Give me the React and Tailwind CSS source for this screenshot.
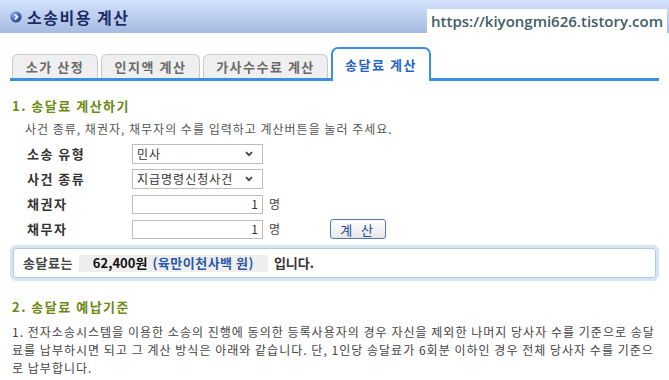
const tabs = [
  { label: '소가 산정', w: 'w-[86px]' },
  { label: '인지액 계산', w: 'w-[99px]' },
  { label: '가사수수료 계산', w: 'w-[125px]' },
];

function Chevron() {
  return (
    <svg width="8" height="6" viewBox="0 0 8 6" className="shrink-0">
      <path d="M1 1.2 L4 4.2 L7 1.2" fill="none" stroke="#444" strokeWidth="1.8" />
    </svg>
  );
}

function SelectBox({ value }) {
  return (
    <div className="w-[131px] h-[20px] border border-[#bdbdbd] bg-white flex items-center justify-between pl-[4px] pr-[9px] text-[12px] tracking-[1px] text-[#333]">
      <span>{value}</span>
      <Chevron />
    </div>
  );
}

function NumberBox() {
  return (
    <div className="w-[131px] h-[19px] border border-[#bdbdbd] bg-white flex items-center justify-end pr-[4px] text-[12px] text-[#333]">
      1
    </div>
  );
}

function Row({ label, children }) {
  return (
    <div className="flex items-center h-[20px]">
      <span className="w-[105px] text-[13px] font-bold tracking-[1.5px] text-[#333]">{label}</span>
      {children}
    </div>
  );
}

export default function App() {
  return (
    <div className="w-[669px] h-[380px] overflow-hidden bg-white font-['Noto_Sans_CJK_KR','Noto_Sans',sans-serif] text-[#333]">
      <header className="h-[33px] flex justify-between bg-linear-to-b from-[#d3e3fc] to-[#a6bae2]">
        <div className="flex items-center gap-[5px] pl-[10px] pt-[1px]">
          <svg width="12" height="12" viewBox="0 0 12 12">
            <defs>
              <radialGradient id="ic" cx="35%" cy="30%" r="75%">
                <stop offset="0" stopColor="#8fb0f0" />
                <stop offset="1" stopColor="#223c8c" />
              </radialGradient>
            </defs>
            <circle cx="6" cy="6" r="5.6" fill="url(#ic)" />
            <path d="M5 3.6 L7.2 6 L5 8.4" fill="none" stroke="#fff" strokeWidth="1.6" />
          </svg>
          <h1 className="text-[16px] font-bold text-[#1c2c68] tracking-[1.5px]">소송비용 계산</h1>
        </div>
        <div className="self-end h-[24px] mr-[2px] bg-white px-[4px] flex items-center font-['Open_Sans',sans-serif] text-[15px] font-semibold text-[#3e5d66]">
          https://kiyongmi626.tistory.com
        </div>
      </header>

      <nav className="mx-[10px] mt-[14px] pl-[2px] flex items-end gap-[3px] border-b-[3px] border-[#3a8fe0]">
        {tabs.map((t) => (
          <div
            key={t.label}
            className={`${t.w} h-[24px] flex items-center justify-center rounded-t-[6px] border border-b-0 border-[#c9c9c9] bg-[#efefef] text-[13px] font-bold tracking-[1.5px] text-[#6a6a6a]`}
          >
            {t.label}
          </div>
        ))}
        <div className="w-[100px] h-[34px] -mb-[3px] flex items-center justify-center rounded-t-[7px] border-2 border-b-0 border-[#3a8fe0] bg-white text-[13px] font-bold tracking-[1.5px] text-[#2563c9]">
          송달료 계산
        </div>
      </nav>

      <section className="px-[12px] pt-[17px]">
        <h2 className="text-[13px] leading-[16px] font-bold text-[#6b8a12] tracking-[1.5px]">1. 송달료 계산하기</h2>
        <p className="mt-[7px] pl-[13px] text-[12px] leading-[16px] tracking-[1px] text-[#555]">
          사건 종류, 채권자, 채무자의 수를 입력하고 계산버튼을 눌러 주세요.
        </p>
        <div className="mt-[7px] pl-[15px] flex flex-col gap-[5px]">
          <Row label="소송 유형">
            <SelectBox value="민사" />
          </Row>
          <Row label="사건 종류">
            <SelectBox value="지급명령신청사건" />
          </Row>
          <Row label="채권자">
            <NumberBox />
            <span className="ml-[6px] text-[12px] text-[#444]">명</span>
          </Row>
          <Row label="채무자">
            <NumberBox />
            <span className="ml-[6px] text-[12px] text-[#444]">명</span>
            <button className="ml-[50px] w-[56px] h-[20px] rounded-[3px] border border-[#5877a6] bg-linear-to-b from-white to-[#e6e6e6] text-[13px] text-[#1b4c9c] tracking-[3px]">
              계 산
            </button>
          </Row>
        </div>
      </section>

      <div className="mx-[10px] mt-[6px] h-[36px] rounded-[6px] border-[3px] border-[#d6e5f4] shadow-[inset_0_0_0_1px_#aecbe8] flex items-center pl-[10px] text-[13px] font-bold">
        <span className="text-[#444] tracking-[0.5px]">송달료는</span>
        <span className="ml-[6px] h-[17px] px-[14px] bg-[#eeeeee] flex items-center">
          <span className="text-[#111]">62,400원</span>
          <span className="ml-[5px] text-[#2a5aa6] tracking-[0.5px]">(육만이천사백 원)</span>
        </span>
        <span className="ml-[6px] text-[#333]">입니다.</span>
      </div>

      <section className="px-[12px] pt-[18px]">
        <h2 className="text-[13px] leading-[16px] font-bold text-[#6b8a12] tracking-[1.5px]">2. 송달료 예납기준</h2>
        <p className="mt-[8px] w-[648px] text-[12px] leading-[18px] text-[#444] tracking-[1.02px]">
          1. 전자소송시스템을 이용한 소송의 진행에 동의한 등록사용자의 경우 자신을 제외한 나머지 당사자 수를 기준으로 송달료를 납부하시면 되고 그 계산 방식은 아래와 같습니다. 단, 1인당 송달료가 6회분 이하인 경우 전체 당사자 수를 기준으로 납부합니다.
        </p>
      </section>
    </div>
  );
}
